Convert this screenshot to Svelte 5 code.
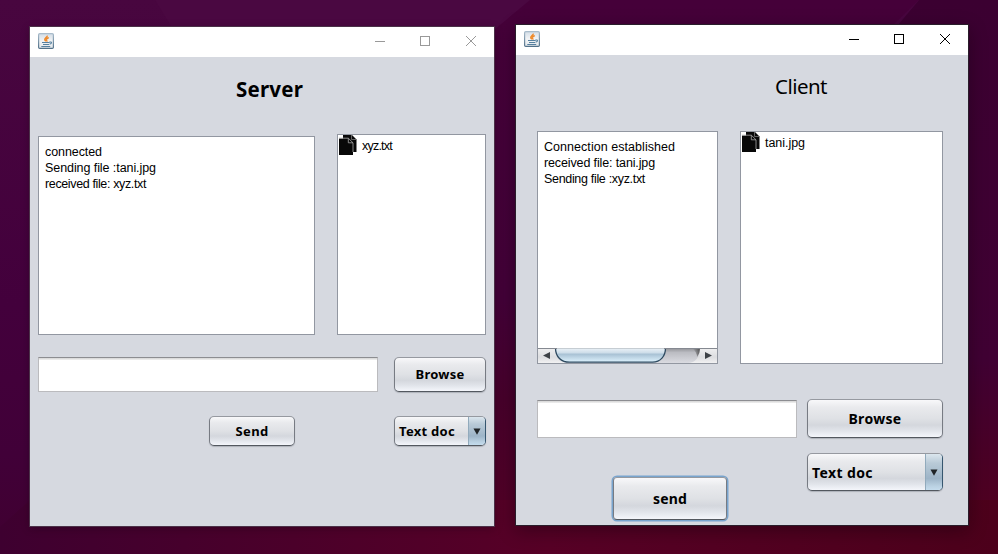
<script>
  const serverLog = [
    { text: 'connected', width: 57 },
    { text: 'Sending file :tani.jpg', width: 111 },
    { text: 'received file: xyz.txt', width: 101 }
  ];
  const clientLog = [
    { text: 'Connection established', width: 131 },
    { text: 'received file: tani.jpg', width: 111 },
    { text: 'Sending file :xyz.txt', width: 101 }
  ];

  // Spreads the letters of a label over a fixed advance width.
  function fit(node, width) {
    const natural = node.getBoundingClientRect().width;
    node.style.letterSpacing = `${(width - natural) / node.textContent.length}px`;
  }
</script>

{#snippet label(text, width)}<span class="label" use:fit={width}>{text}</span>{/snippet}

{#snippet titlebar()}
  <header class="titlebar">
    <svg class="java" width="16" height="16" viewBox="0 0 16 16">
      <defs>
        <linearGradient id="tile" x1="0" y1="0" x2="0" y2="1">
          <stop offset="0" stop-color="#d3dde6" /><stop offset=".5" stop-color="#f2f4f6" /><stop offset="1" stop-color="#e2e7eb" />
        </linearGradient>
        <linearGradient id="edge" x1="0" y1="0" x2="0" y2="1">
          <stop offset="0" stop-color="#a9bccb" /><stop offset="1" stop-color="#527189" />
        </linearGradient>
      </defs>
      <rect x=".6" y=".6" width="14.8" height="14.8" rx="1.2" fill="url(#tile)" stroke="url(#edge)" stroke-width="1.2" />
      <path d="M9.300 2.600C9.500 4.300 6.500 5 6.800 6.600c.1.8.8 1 1 1.800M10.800 4.800C9.500 5 8.200 6 8.400 7c.2.7.8.9.3 1.500" fill="none" stroke="#ee8a2b" stroke-width="1.500" />
      <path d="M4 9.500h7.500M5 11.500h6M3.300 13.500h8.900M11.400 9c2.800-.5 2.700 2 .1 2.300" fill="none" stroke="#56809f" stroke-width="1.1" />
    </svg>
    <svg class="controls" width="138" height="30" viewBox="0 0 138 30" fill="none" stroke="currentColor">
      <path d="M19 14.500h10M64.500 9.500h9v9h-9z" shape-rendering="crispEdges" />
      <path d="m110 9 10 10m0-10-10 10" />
    </svg>
  </header>
{/snippet}

{#snippet files(name, width)}
  <div class="files">
    <svg width="18" height="20" viewBox="0 0 18 20">
      <path d="M4 0h9l4.500 4.500V17H4z" fill="#080808" />
      <path d="M12.500 0v4.500h5" fill="none" stroke="#888" stroke-width=".7" />
      <path d="M0 3.500h9.500L14 8v12H0z" fill="#080808" />
      <path d="M0 3.200h9.300v4.600H14V17M9.300 3.200 14 7.800" fill="none" stroke="#aaa" stroke-width=".8" />
    </svg>
    <div class="fname">{@render label(name, width)}</div>
  </div>
{/snippet}

{#snippet combo(width)}
  <div class="button combo">
    <div class="value">{@render label('Text doc', width)}</div>
    <div class="arrow"><svg width="8" height="7" viewBox="0 0 8 7"><path d="M.5.5h7L4 6.800z" fill="#202427" /></svg></div>
  </div>
{/snippet}

<div class="desktop">
  <svg class="wallpaper" width="998" height="554" viewBox="0 0 998 554">
    <defs>
      <linearGradient id="base" x1="0" y1="0" x2="0" y2="1">
        <stop offset="0" stop-color="#48063f" /><stop offset=".55" stop-color="#43003c" /><stop offset=".82" stop-color="#410038" /><stop offset="1" stop-color="#400030" />
      </linearGradient>
      <linearGradient id="right" x1="0" y1="0" x2="0" y2="1">
        <stop offset="0" stop-color="#3b0031" /><stop offset=".65" stop-color="#400033" /><stop offset=".85" stop-color="#4b0024" /><stop offset="1" stop-color="#53001e" />
      </linearGradient>
      <linearGradient id="gap" x1="0" y1="0" x2="0" y2="1">
        <stop offset="0" stop-color="#450039" /><stop offset=".6" stop-color="#430038" /><stop offset=".8" stop-color="#47002b" /><stop offset="1" stop-color="#500027" />
      </linearGradient>
      <linearGradient id="floor" x1="0" y1="0" x2="1" y2="0">
        <stop offset="0" stop-color="#3e0030" /><stop offset=".23" stop-color="#48002b" /><stop offset=".55" stop-color="#570026" /><stop offset="1" stop-color="#4c001b" />
      </linearGradient>
    </defs>
    <path d="M0 0h998v554H0z" fill="url(#base)" />
    <path d="M155 0h375l-34 29-24 20H185z" fill="#4a0841" />
    <path d="m530 0-36 30v470h24V30h370L919 0z" fill="url(#gap)" />
    <path d="M919 0h79v554h-58V25h-42z" fill="url(#right)" />
    <path d="M0 527 30 500h968v54H0z" fill="url(#floor)" />
  </svg>

  <section class="window server">
    {@render titlebar()}
    <main>
      <h1>{@render label('Server', 67)}</h1>
      <div class="panes">
        <div class="log">
          {#each serverLog as line}<div>{@render label(line.text, line.width)}</div>{/each}
        </div>
        {@render files('xyz.txt', 30)}
      </div>
      <div class="row pick"><div class="input"></div><div class="button">{@render label('Browse', 49)}</div></div>
      <div class="row act"><div class="button send">{@render label('Send', 33)}</div>{@render combo(56)}</div>
    </main>
  </section>

  <section class="window client">
    {@render titlebar()}
    <main>
      <h1>{@render label('Client', 52)}</h1>
      <div class="panes">
        <div class="log">
          {#each clientLog as line}<div>{@render label(line.text, line.width)}</div>{/each}
          <svg class="scroll" width="179" height="15" viewBox="0 0 179 15">
            <defs>
              <linearGradient id="track" x1="0" y1="0" x2="0" y2="1">
                <stop offset="0" stop-color="#8f9095" /><stop offset=".3" stop-color="#bbbcc2" /><stop offset="1" stop-color="#dadbe1" />
              </linearGradient>
              <linearGradient id="thumb" x1="0" y1="0" x2="0" y2="1">
                <stop offset="0" stop-color="#edf3f8" /><stop offset=".36" stop-color="#cbdce8" /><stop offset=".42" stop-color="#a7c0d3" /><stop offset="1" stop-color="#def3fe" />
              </linearGradient>
              <linearGradient id="cap" x1="0" y1="0" x2="0" y2="1">
                <stop offset="0" stop-color="#f0f0f1" /><stop offset=".6" stop-color="#dcdde0" /><stop offset="1" stop-color="#f1f1f2" />
              </linearGradient>
              <linearGradient id="cove" x1="0" y1="0" x2="1" y2="0">
                <stop offset="0" stop-color="#555" stop-opacity="0" /><stop offset="1" stop-color="#333" stop-opacity=".75" />
              </linearGradient>
            </defs>
            <path d="M0 0h179v15H0z" fill="url(#cap)" />
            <path d="M17 0h145c0 9-5 15-12 15H29C22 15 17 9 17 0z" fill="url(#track)" />
            <path d="M154 0h8q0 5-3 9 0-5-5-9z" fill="url(#cove)" />
            <path d="M17.500 0c0 9 6 14.200 14 14.200h83c8 0 13-6 13-14.200z" fill="url(#thumb)" stroke="#2e4a60" stroke-width="1.300" />
            <path d="M0 .5h179" stroke="#858991" />
            <path d="M19 .5h107" stroke="#c6cdd3" />
            <path d="m5 7.500 7-3.500v7zM174 7.500 167 4v7z" fill="#3d4146" />
          </svg>
        </div>
        {@render files('tani.jpg', 40)}
      </div>
      <div class="row pick"><div class="input"></div><div class="button">{@render label('Browse', 53)}</div></div>
      <div class="row act"><div class="button send focused">{@render label('send', 34)}</div>{@render combo(61)}</div>
    </main>
  </section>
</div>

<style>
  .desktop { position: relative; width: 998px; height: 554px; overflow: hidden; font-family: "Liberation Sans", Arial, sans-serif; color: #000; }
  .wallpaper { display: block; }
  .window { position: absolute; box-sizing: border-box; background: #d6d9e0; display: flex; flex-direction: column; }
  .server { left: 30px; top: 27px; width: 464px; height: 499px; box-shadow: 0 0 0 1px #4b3148, 0 2px 8px rgba(20, 0, 15, .35); }
  .client { left: 516px; top: 25px; width: 452px; height: 500px; box-shadow: 0 0 0 1px #291d2a, 0 5px 17px rgba(10, 0, 8, .4); }
  .titlebar { height: 30px; flex: none; background: #fff; display: flex; justify-content: space-between; align-items: flex-start; padding-left: 8px; }
  .java { margin-top: 6px; }
  .server .controls { color: #999; }
  .client .controls { color: #000; }
  main { flex: 1; display: flex; flex-direction: column; }
  .label { white-space: pre; display: inline-block; }
  h1 { box-sizing: border-box; margin: 0; font-family: "Noto Sans", "DejaVu Sans", sans-serif; font-size: 20.500px; line-height: 26px; font-weight: 700; white-space: nowrap; }
  .server h1 { padding: 19px 0 0 206px; height: 77px; }
  .client h1 { padding: 18px 0 0 259px; height: 76px; font-weight: 400; }
  .panes { display: flex; align-items: flex-end; justify-content: space-between; }
  .server .panes { padding: 0 8px; }
  .client .panes { padding: 0 25px 0 21px; }
  .log, .files { box-sizing: border-box; background: #fff; border: 1px solid #9297a1; font-size: 12.500px; }
  .log { display: flex; flex-direction: column; line-height: 16px; padding: 7px 0 0 6px; }
  .server .log { width: 277px; height: 199px; }
  .client .log { width: 181px; height: 233px; }
  .server .files { width: 149px; height: 201px; }
  .client .files { width: 203px; height: 233px; }
  .scroll { margin: auto 0 0 -6px; display: block; }
  .files { display: flex; align-items: flex-start; gap: 5px; padding-left: 1px; }
  .fname { line-height: 20px; padding-top: 1px; }
  .row { display: flex; justify-content: space-between; }
  .server .row { padding: 0 8px; }
  .client .row { padding: 0 25px 0 21px; }
  .input { box-sizing: border-box; background: linear-gradient(#d4d4d4, #f1f1f1 2px, #fff 2px); border: 1px solid #bbbbbe; border-top-color: #8c8d91; }
  .button { box-sizing: border-box; display: flex; align-items: center; justify-content: center; border: 1px solid #777b83; border-color: #9699a0 #777b83 #53585f; border-radius: 5px; background: linear-gradient(#f8f8fa, #e9eaed 20%, #dfe1e5 50%, #d4d7dd 68%, #e2e5eb 84%, #f4f6fb); box-shadow: 0 1px 1px rgba(80, 85, 95, .3); font: 700 13px "Noto Sans", "DejaVu Sans", sans-serif; }
  .client .button { font-size: 14px; }
  .server .pick { margin-top: 22px; height: 35px; }
  .server .input { width: 340px; }
  .server .pick .button { width: 92px; padding-bottom: 2px; }
  .server .act { margin-top: 24px; height: 30px; }
  .server .send { width: 86px; margin-left: 171px; }
  .server .combo { width: 92px; }
  .client .pick { margin-top: 35px; height: 39px; }
  .client .input { width: 260px; height: 38px; margin-top: 1px; }
  .client .pick .button { width: 136px; }
  .client .act { margin-top: 15px; align-items: flex-start; }
  .client .send { width: 114px; height: 43px; margin: 24px 0 0 76px; }
  .focused { border-radius: 4px; box-shadow: 0 0 0 1.500px #78a4cd; }
  .client .combo { width: 136px; height: 38px; }
  .combo { justify-content: flex-start; align-items: stretch; padding: 0; overflow: hidden; border-right-color: #36566f; }
  .value { flex: 1; padding-left: 4px; display: flex; align-items: center; }
  .arrow { width: 16px; flex: none; margin: -1px 0; border: solid #536f85; border-width: 1px 0 1px 1px; border-left-color: #91aabc; border-bottom-color: #294355; background: linear-gradient(#dbe6ee, #b9cad7 25%, #9db4c7 68%, #b9d0e1 88%, #c4dced); display: flex; align-items: center; justify-content: center; }
</style>
